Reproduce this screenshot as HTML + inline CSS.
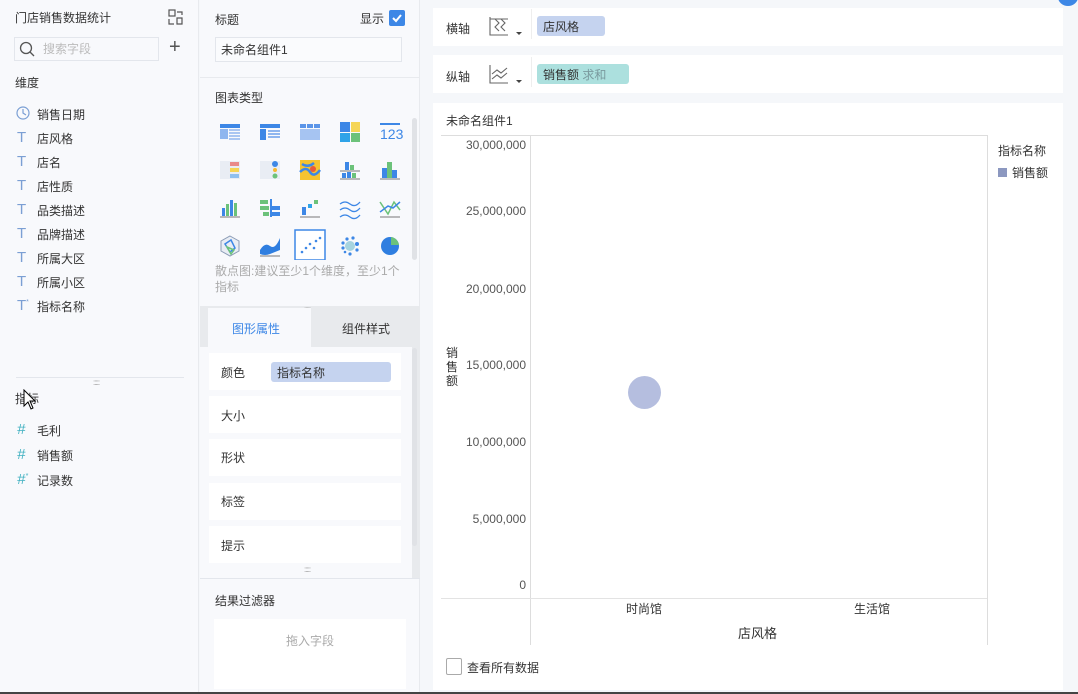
<!DOCTYPE html>
<html><head><meta charset="utf-8">
<style>
*{margin:0;padding:0;box-sizing:border-box}
body{width:1078px;height:694px;overflow:hidden;background:#f5f7fa;font-family:"Liberation Sans","Noto Sans CJK SC",sans-serif;font-size:12px;color:#333;position:relative}
.a{position:absolute}
.t{position:absolute;white-space:nowrap}
.ic{position:absolute;width:22px;height:22px}
</style></head><body>
<!-- left panel -->
<div class="a" style="left:0;top:0;width:199px;height:694px;background:#f8f9fc;border-right:1px solid #e8eaee"></div>
<div class="t" style="left:15px;top:9px;font-size:12px;color:#333">门店销售数据统计</div>
<svg class="a" style="left:168px;top:9px" width="16" height="16" viewBox="0 0 16 16" fill="none" stroke="#555" stroke-width="1.2"><rect x="1" y="1" width="6" height="6"/><path d="M9 3h5v3M1 10v5h5M9 9h5v6H9z"/></svg>
<div class="a" style="left:14px;top:37px;width:145px;height:24px;border:1px solid #e3e6ec;background:#f8f9fc"></div>
<svg class="a" style="left:19px;top:41px" width="16" height="16" viewBox="0 0 16 16" fill="none" stroke="#555" stroke-width="1.3"><circle cx="7" cy="7" r="5.5"/><path d="M11 11l4 4"/></svg>
<div class="t" style="left:43px;top:40px;color:#bbb">搜索字段</div>
<div class="t" style="left:169px;top:36px;font-size:20px;color:#555;font-weight:300">+</div>
<div class="t" style="left:15px;top:74px">维度</div>
<svg class="a" style="left:16px;top:106px" width="14" height="14" viewBox="0 0 14 14" fill="none" stroke="#7b9fd4" stroke-width="1.2"><circle cx="7" cy="7" r="6"/><path d="M7 3v4l3 2"/></svg>
<div class="t" style="left:37px;top:106px">销售日期</div>
<div class="t" style="left:17px;top:129px;color:#7b9fd4;font-size:15px">T</div><div class="t" style="left:37px;top:130px">店风格</div>
<div class="t" style="left:17px;top:153px;color:#7b9fd4;font-size:15px">T</div><div class="t" style="left:37px;top:154px">店名</div>
<div class="t" style="left:17px;top:177px;color:#7b9fd4;font-size:15px">T</div><div class="t" style="left:37px;top:178px">店性质</div>
<div class="t" style="left:17px;top:201px;color:#7b9fd4;font-size:15px">T</div><div class="t" style="left:37px;top:202px">品类描述</div>
<div class="t" style="left:17px;top:225px;color:#7b9fd4;font-size:15px">T</div><div class="t" style="left:37px;top:226px">品牌描述</div>
<div class="t" style="left:17px;top:249px;color:#7b9fd4;font-size:15px">T</div><div class="t" style="left:37px;top:250px">所属大区</div>
<div class="t" style="left:17px;top:273px;color:#7b9fd4;font-size:15px">T</div><div class="t" style="left:37px;top:274px">所属小区</div>
<div class="t" style="left:17px;top:297px;color:#7b9fd4;font-size:15px">T<sup style="font-size:7px">*</sup></div><div class="t" style="left:37px;top:298px">指标名称</div>
<div class="a" style="left:16px;top:377px;width:168px;height:1px;background:#e3e6ec"></div>
<div class="t" style="left:93px;top:378px;font-size:8px;color:#999;letter-spacing:-1px">:::::</div>
<div class="t" style="left:15px;top:390px">指标</div>
<svg class="a" style="left:23px;top:389px" width="14" height="22" viewBox="0 0 14 22"><path d="M1 1v16l4-4 3 7 2-1-3-7h5z" fill="#fff" stroke="#000" stroke-width="1"/></svg>
<div class="t" style="left:17px;top:421px;color:#3fb0c0;font-size:15px;font-style:italic">#</div><div class="t" style="left:37px;top:422px">毛利</div>
<div class="t" style="left:17px;top:446px;color:#3fb0c0;font-size:15px;font-style:italic">#</div><div class="t" style="left:37px;top:447px">销售额</div>
<div class="t" style="left:17px;top:471px;color:#3fb0c0;font-size:15px;font-style:italic">#<sup style="font-size:7px">*</sup></div><div class="t" style="left:37px;top:472px">记录数</div>

<!-- middle panel -->
<div class="a" style="left:200px;top:0;width:220px;height:694px;background:#f8f9fc;border-right:1px solid #e8eaee"></div>
<div class="t" style="left:215px;top:11px">标题</div>
<div class="t" style="left:360px;top:10px">显示</div>
<div class="a" style="left:389px;top:10px;width:16px;height:16px;background:#3d87e6;border-radius:2px"></div>
<svg class="a" style="left:389px;top:10px" width="16" height="16"><path d="M4 8l3 3 5-6" fill="none" stroke="#fff" stroke-width="2"/></svg>
<div class="a" style="left:215px;top:37px;width:187px;height:25px;border:1px solid #e3e6ec;background:#fafbfd"></div>
<div class="t" style="left:221px;top:41px">未命名组件1</div>
<div class="a" style="left:200px;top:77px;width:220px;height:1px;background:#e8eaee"></div>
<div class="t" style="left:215px;top:89px">图表类型</div>
<div class="a" style="left:412px;top:118px;width:5px;height:142px;background:#e0e2e6;border-radius:3px"></div>
<svg class="a" style="left:218px;top:120px" width="185" height="140" viewBox="0 0 185 140">
<!-- row1 -->
<g transform="translate(2,4)"><rect width="20" height="4" fill="#3d87e6"/><rect y="5" width="8" height="10" fill="#8fb6ef"/><path d="M9 6h11M9 9h11M9 12h11M9 15h11" stroke="#8fb6ef" stroke-width="1.5"/></g>
<g transform="translate(42,4)"><rect width="20" height="4" fill="#3d87e6"/><rect y="5" width="6" height="11" fill="#3d87e6"/><path d="M8 7h12M8 10h12M8 13h12" stroke="#8fb6ef" stroke-width="2"/></g>
<g transform="translate(82,4)" fill="#5b95e8"><rect width="6" height="4"/><rect x="7" width="6" height="4"/><rect x="14" width="6" height="4"/><rect y="5" width="20" height="11" fill="#a6c4f2"/></g>
<g transform="translate(122,2)"><rect width="10" height="10" fill="#3d87e6"/><rect x="11" width="9" height="10" fill="#f5d556"/><rect y="11" width="10" height="9" fill="#2fa3e8"/><rect x="11" y="11" width="9" height="9" fill="#6cc27a"/></g>
<text x="162" y="19" font-size="14" fill="#3d87e6" font-family="Liberation Sans Narrow,Liberation Sans">123</text>
<rect x="162" y="3" width="20" height="2" fill="#3d87e6"/>
<!-- row2 -->
<g transform="translate(2,41)"><rect width="20" height="18" fill="#e9edf4"/><rect x="10" y="1" width="9" height="4" fill="#e98a8a"/><rect x="10" y="7" width="9" height="4" fill="#f5d556"/><rect x="10" y="13" width="9" height="4" fill="#8fc0ef"/></g>
<g transform="translate(42,41)"><rect width="20" height="18" fill="#e9edf4"/><circle cx="15" cy="3" r="3" fill="#3d87e6"/><circle cx="15" cy="9" r="2" fill="#f5b830"/><circle cx="15" cy="15" r="2.5" fill="#6cc27a"/></g>
<g transform="translate(82,40)"><rect width="20" height="20" fill="#f5c330"/><path d="M0 12q6-6 10 0t10-2M2 4q6 4 12-1" stroke="#3d87e6" stroke-width="2.5" fill="none"/><circle cx="13" cy="9" r="3" fill="#e95a3a"/></g>
<g transform="translate(122,40)"><rect x="5" y="2" width="4" height="8" fill="#3d87e6"/><rect x="10" y="5" width="4" height="5" fill="#6cc27a"/><rect x="2" y="13" width="4" height="5" fill="#3d87e6"/><rect x="7" y="12" width="4" height="6" fill="#3d87e6"/><rect x="12" y="13" width="4" height="5" fill="#6cc27a"/><path d="M0 11h20M0 19h20" stroke="#777"/></g>
<g transform="translate(162,40)"><rect x="2" y="8" width="5" height="10" fill="#3d87e6"/><rect x="7" y="2" width="5" height="16" fill="#6cc27a"/><rect x="12" y="10" width="5" height="8" fill="#3d87e6"/><path d="M0 19h20" stroke="#777"/></g>
<!-- row3 -->
<g transform="translate(2,78)"><rect x="2" y="10" width="3" height="8" fill="#3d87e6"/><rect x="6" y="6" width="3" height="12" fill="#6cc27a"/><rect x="10" y="2" width="3" height="16" fill="#3d87e6"/><rect x="14" y="5" width="3" height="13" fill="#6cc27a"/><path d="M0 19h20" stroke="#777"/></g>
<g transform="translate(42,78)"><rect x="0" y="2" width="8" height="4" fill="#6cc27a"/><rect x="10" y="1" width="2" height="18" fill="#3d87e6"/><rect x="0" y="8" width="9" height="4" fill="#6cc27a"/><rect x="12" y="8" width="8" height="4" fill="#3d87e6"/><rect x="3" y="14" width="6" height="4" fill="#6cc27a"/><rect x="12" y="14" width="8" height="4" fill="#3d87e6"/></g>
<g transform="translate(82,78)"><rect x="2" y="9" width="4" height="8" fill="#3d87e6"/><rect x="8" y="6" width="4" height="4" fill="#2fa3e8"/><rect x="14" y="2" width="4" height="4" fill="#6cc27a"/><path d="M0 19h20" stroke="#777"/></g>
<g transform="translate(122,78)" stroke="#3d87e6" fill="none" stroke-width="1.3"><path d="M0 6q5-4 10 0t10-2M0 12q5-4 10 0t10-2M0 19q5-4 10 0t10-2"/></g>
<g transform="translate(162,78)" fill="none" stroke-width="1.5"><path d="M0 4l8 12 6-12 6 8" stroke="#6cc27a"/><path d="M0 14l8-6 5 2 7-6" stroke="#3d87e6"/><path d="M0 19h20" stroke="#777" stroke-width="1"/></g>
<!-- row4 -->
<g transform="translate(2,116)"><path d="M10 0l9 5v10l-9 5-9-5V5z" fill="#e9edf4" stroke="#8a9bb5"/><path d="M5 8l6-4 4 8-5 4z" fill="none" stroke="#3d87e6" stroke-width="1.5"/><path d="M7 11l7 3-3 4z" fill="none" stroke="#6cc27a" stroke-width="1.5"/></g>
<g transform="translate(42,116)"><path d="M0 14q5-8 10-4t10-8v12q-5 2-10 4t-10 0z" fill="#2f7ee0"/><path d="M0 20h20" stroke="#777"/></g>
<rect x="77" y="110" width="30" height="30" fill="#fff" stroke="#3d87e6" stroke-width="1.5"/>
<g fill="#3d87e6"><circle cx="84" cy="132" r="1.3"/><circle cx="88" cy="128" r="1.3"/><circle cx="92" cy="124" r="1.3"/><circle cx="96" cy="128" r="1.3"/><circle cx="98" cy="121" r="1.3"/><circle cx="102" cy="118" r="1.3"/></g>
<g transform="translate(122,116)"><circle cx="10" cy="10" r="5" fill="#a7d4df"/><circle cx="3" cy="7" r="1.6" fill="#3d87e6"/><circle cx="3" cy="12" r="1.6" fill="#3d87e6"/><circle cx="7" cy="3" r="1.6" fill="#3d87e6"/><circle cx="13" cy="2" r="1.6" fill="#3d87e6"/><circle cx="17" cy="8" r="2" fill="#3d87e6"/><circle cx="17" cy="14" r="1.6" fill="#3d87e6"/><circle cx="10" cy="18" r="1.6" fill="#3d87e6"/><circle cx="5" cy="16" r="1.3" fill="#3d87e6"/></g>
<g transform="translate(162,116)"><circle cx="10" cy="10" r="9" fill="#2f7ee0"/><path d="M11 1a9 9 0 0 1 8 8h-8z" fill="#6cc27a"/></g>
</svg>
<div class="t" style="left:215px;top:263px;color:#aaa;font-size:12px;line-height:16px;white-space:normal;width:190px">散点图:建议至少1个维度，至少1个指标</div>
<div class="a" style="left:200px;top:306px;width:220px;height:272px;background:#e8eaed"></div>
<div class="t" style="left:304px;top:305px;font-size:8px;color:#999;letter-spacing:-1px">:::::</div>
<div class="a" style="left:208px;top:308px;width:103px;height:40px;background:#f8f9fc"></div>
<div class="t" style="left:232px;top:320px;color:#3d87e6">图形属性</div>
<div class="t" style="left:342px;top:320px;color:#333">组件样式</div>
<div class="a" style="left:200px;top:347px;width:212px;height:231px;background:#f8f9fc"></div>
<div class="a" style="left:412px;top:348px;width:5px;height:198px;background:#e0e2e6;border-radius:3px"></div>
<div class="a" style="left:209px;top:353px;width:192px;height:37px;background:#fff"></div>
<div class="t" style="left:221px;top:364px">颜色</div>
<div class="a" style="left:271px;top:362px;width:120px;height:20px;background:#c5d3ef;border-radius:3px"></div>
<div class="t" style="left:277px;top:364px">指标名称</div>
<div class="a" style="left:209px;top:396px;width:192px;height:37px;background:#fff"></div><div class="t" style="left:221px;top:407px">大小</div>
<div class="a" style="left:209px;top:439px;width:192px;height:37px;background:#fff"></div><div class="t" style="left:221px;top:449px">形状</div>
<div class="a" style="left:209px;top:483px;width:192px;height:37px;background:#fff"></div><div class="t" style="left:221px;top:493px">标签</div>
<div class="a" style="left:209px;top:526px;width:192px;height:37px;background:#fff"></div><div class="t" style="left:221px;top:537px">提示</div>
<div class="t" style="left:304px;top:565px;font-size:8px;color:#999;letter-spacing:-1px">:::::</div>
<div class="a" style="left:200px;top:578px;width:220px;height:1px;background:#e3e6ec"></div>
<div class="t" style="left:215px;top:592px">结果过滤器</div>
<div class="a" style="left:214px;top:619px;width:192px;height:70px;background:#fff"></div>
<div class="t" style="left:286px;top:632px;color:#aaa">拖入字段</div>

<!-- right -->
<div class="a" style="left:433px;top:8px;width:630px;height:38px;background:#fff"></div>
<div class="t" style="left:446px;top:20px">横轴</div>
<svg class="a" style="left:489px;top:16px" width="36" height="22" viewBox="0 0 36 22" fill="none" stroke="#666" stroke-width="1.1"><path d="M1 1v18h18M6 3l4 4-4 4 4 4M12 3l4 4-4 4 4 4M1 3h18"/><path d="M27 16h6l-3 3z" fill="#444" stroke="none"/></svg>
<div class="a" style="left:531px;top:9px;width:1px;height:30px;background:#eee"></div>
<div class="a" style="left:537px;top:16px;width:68px;height:20px;background:#c5d3ef;border-radius:3px"></div>
<div class="t" style="left:543px;top:18px">店风格</div>
<div class="a" style="left:433px;top:55px;width:630px;height:38px;background:#fff"></div>
<div class="t" style="left:446px;top:68px">纵轴</div>
<svg class="a" style="left:489px;top:64px" width="36" height="22" viewBox="0 0 36 22" fill="none" stroke="#666" stroke-width="1.1"><path d="M1 1v18h18M3 10l5-4 4 3 6-5M3 15l5-4 4 3 6-5"/><path d="M27 16h6l-3 3z" fill="#444" stroke="none"/></svg>
<div class="a" style="left:531px;top:57px;width:1px;height:30px;background:#eee"></div>
<div class="a" style="left:537px;top:64px;width:92px;height:20px;background:#ace0de;border-radius:3px"></div>
<div class="t" style="left:543px;top:66px">销售额 <span style="color:#7a9a9e">求和</span></div>
<div class="a" style="left:1058px;top:-12px;width:20px;height:18px;background:#3d87e6;border-radius:50%"></div>

<div class="a" style="left:433px;top:103px;width:630px;height:587px;background:#fff"></div>
<div class="t" style="left:446px;top:112px">未命名组件1</div>
<div class="a" style="left:441px;top:135px;width:546px;height:1px;background:#ddd"></div>
<div class="a" style="left:530px;top:135px;width:1px;height:510px;background:#ddd"></div>
<div class="a" style="left:987px;top:135px;width:1px;height:510px;background:#ddd"></div>
<div class="a" style="left:441px;top:598px;width:546px;height:1px;background:#e3e3e3"></div>
<div class="t" style="left:426px;top:138px;width:100px;text-align:right;color:#555">30,000,000</div>
<div class="t" style="left:426px;top:204px;width:100px;text-align:right;color:#555">25,000,000</div>
<div class="t" style="left:426px;top:282px;width:100px;text-align:right;color:#555">20,000,000</div>
<div class="t" style="left:426px;top:358px;width:100px;text-align:right;color:#555">15,000,000</div>
<div class="t" style="left:426px;top:435px;width:100px;text-align:right;color:#555">10,000,000</div>
<div class="t" style="left:426px;top:512px;width:100px;text-align:right;color:#555">5,000,000</div>
<div class="t" style="left:426px;top:578px;width:100px;text-align:right;color:#555">0</div>
<div class="t" style="left:446px;top:346px;width:14px;line-height:14px;white-space:normal;font-size:12px">销售额</div>
<div class="a" style="left:628px;top:376px;width:33px;height:33px;border-radius:50%;background:#b5bedf"></div>
<div class="t" style="left:626px;top:600px">时尚馆</div>
<div class="t" style="left:854px;top:600px">生活馆</div>
<div class="t" style="left:738px;top:623px;font-size:13px">店风格</div>
<div class="t" style="left:998px;top:142px">指标名称</div>
<div class="a" style="left:998px;top:168px;width:9px;height:9px;background:#8c98c0"></div>
<div class="t" style="left:1012px;top:164px">销售额</div>
<div class="a" style="left:446px;top:658px;width:16px;height:17px;border:1px solid #aaa;border-radius:2px"></div>
<div class="t" style="left:467px;top:659px">查看所有数据</div>
<div class="a" style="left:0;top:692px;width:1078px;height:2px;background:#444"></div>
</body></html>
